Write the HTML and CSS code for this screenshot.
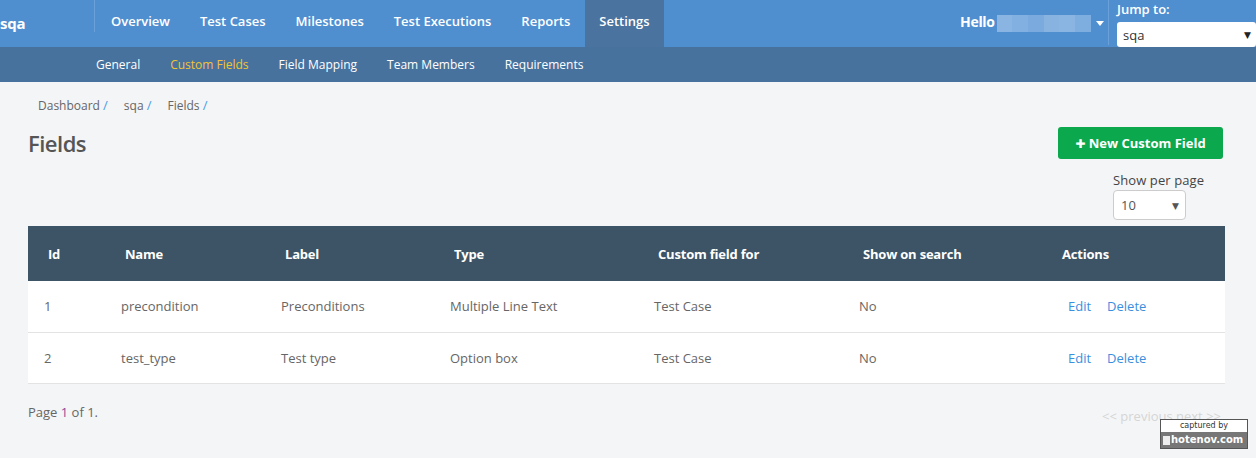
FILE: index.html
```html
<!DOCTYPE html>
<html>
<head>
<meta charset="utf-8">
<link rel="stylesheet" href="styles.css">
</head>
<body>
<header class="topbar">
  <a class="brand">sqa</a>
  <nav class="mainnav">
    <a>Overview</a>
    <a>Test Cases</a>
    <a>Milestones</a>
    <a>Test Executions</a>
    <a>Reports</a>
    <a class="active">Settings</a>
  </nav>
  <div class="user">
    <span class="hello">Hello</span>
    <span class="blur"><i></i><i></i><i></i><i></i><i></i><i></i></span>
    <span class="caret"></span>
  </div>
  <div class="jump">
    <label>Jump to:</label>
    <div class="jumpselect"><span>sqa</span><span class="tri">▼</span></div>
  </div>
</header>
<nav class="subnav">
  <a>General</a>
  <a class="active">Custom Fields</a>
  <a>Field Mapping</a>
  <a>Team Members</a>
  <a>Requirements</a>
</nav>
<main class="content">
  <div class="crumbs">
    <span>Dashboard <b>/</b></span>
    <span>sqa <b>/</b></span>
    <span>Fields <b>/</b></span>
  </div>
  <div class="titlerow">
    <h1>Fields</h1>
    <button class="newbtn"><span class="plus">✚</span> New Custom Field</button>
  </div>
  <div class="perpage">
    <div class="perwrap">
      <div class="perlabel">Show per page</div>
      <div class="perselect"><span>10</span><span class="tri">▼</span></div>
    </div>
  </div>
  <table class="grid">
    <thead>
      <tr><th class="c-id">Id</th><th class="c-name">Name</th><th class="c-label">Label</th><th class="c-type">Type</th><th class="c-for">Custom field for</th><th class="c-show">Show on search</th><th class="c-act">Actions</th></tr>
    </thead>
    <tbody>
      <tr><td>1</td><td>precondition</td><td>Preconditions</td><td>Multiple Line Text</td><td>Test Case</td><td>No</td><td class="acts"><a>Edit</a><a>Delete</a></td></tr>
      <tr><td>2</td><td>test_type</td><td>Test type</td><td>Option box</td><td>Test Case</td><td>No</td><td class="acts"><a>Edit</a><a>Delete</a></td></tr>
    </tbody>
  </table>
  <div class="pager">
    <span class="pageinfo">Page <em>1</em> of 1.</span>
    <span class="prevnext">&lt;&lt; previous next &gt;&gt;</span>
  </div>
</main>
<div class="stamp"><div class="st1">captured by</div><div class="st2"><i></i>hotenov.com</div></div>
</body>
</html>
```
FILE: styles.css
```css
* { box-sizing: border-box; }
html, body { margin: 0; padding: 0; }
body {
  width: 1256px;
  height: 458px;
  overflow: hidden;
  background: #f4f5f7;
  font-family: "Open Sans", "DejaVu Sans", sans-serif;
  font-size: 13px;
  color: #555;
  position: relative;
}
a { cursor: pointer; }

.topbar {
  height: 47px;
  background: #4f8fd0;
  display: flex;
  align-items: stretch;
  color: #fff;
}
.brand {
  width: 95px;
  border-right: 1px solid #6aa1da;
  margin: 0 0 15px 0;
  font-weight: 700;
  font-size: 15px;
  line-height: 47px;
  letter-spacing: -0.2px;
}
.mainnav { display: flex; margin-left: 1px; }
.mainnav a {
  display: block;
  padding: 0 15px;
  font-weight: 600;
  font-size: 13px;
  line-height: 42px;
  color: #fff;
}
.mainnav a.active { background: #4a73a0; padding: 0 0 0 14px; width: 79px; }
.user {
  margin-left: auto;
  display: flex;
  align-items: flex-start;
  padding-top: 13px;
  width: 148px;
}
.hello { font-weight: 700; font-size: 14px; line-height: 18px; letter-spacing: -0.3px; }
.blur { display: flex; margin-left: 2px; width: 94px; height: 17px; margin-top: 2px; }
.blur i { flex: 1; display: block; background: #8ab5e2; }
.blur i:nth-child(2) { background: #82b0e0; }
.blur i:nth-child(3) { background: #7aaade; }
.blur i:nth-child(4) { background: #88b3e1; }
.blur i:nth-child(6) { background: #7eaddf; }
.caret {
  width: 0; height: 0;
  border-left: 4px solid transparent;
  border-right: 4px solid transparent;
  border-top: 5px solid #fff;
  margin: 8px 0 0 5px;
}
.jump {
  border-left: 1px solid #6aa1da;
  padding-left: 8px;
  width: 148px;
  margin-bottom: 2px;
}
.jump label { display: block; font-weight: 600; font-size: 13px; line-height: 16px; margin-top: 1px; }
.jumpselect {
  margin-top: 5px;
  height: 25px;
  background: #fff;
  border-radius: 3px;
  color: #333;
  display: flex;
  align-items: center;
  justify-content: space-between;
  padding: 0 5px 0 6px;
  font-size: 13px;
}
.tri { font-size: 9px; color: #222; }

.subnav {
  height: 35px;
  background: #47729e;
  display: flex;
  align-items: center;
  padding-left: 81px;
}
.subnav a {
  color: #fff;
  font-size: 12px;
  font-weight: 500;
  padding: 0 15px;
  line-height: 35px;
}
.subnav a.active { color: #f4c430; }

.content { padding: 0 31px 0 28px; }
.crumbs { padding: 14px 0 0 10px; line-height: 18px; display: flex; gap: 16px; color: #666; font-size: 12px; }
.crumbs b { font-weight: 400; color: #4a9ee6; font-size: 13px; }
.titlerow { display: flex; justify-content: space-between; align-items: center; margin-top: 12px; padding-right: 2px; }
h1 { margin: 0; font-size: 22px; font-weight: 600; color: #555; line-height: 30px; letter-spacing: -0.5px; }
.newbtn {
  background: #0ba84e;
  border: 0;
  border-radius: 3px;
  color: #fff;
  font-family: inherit;
  font-weight: 700;
  font-size: 13px;
  width: 165px;
  height: 32px;
  padding: 0;
}
.plus { font-size: 12px; }
.perpage { display: flex; justify-content: flex-end; margin-top: 12px; padding-right: 20px; }
.perwrap { width: 92px; }
.perlabel { font-size: 13px; color: #444; line-height: 18px; letter-spacing: 0.1px; }
.perselect {
  margin-top: 1px;
  width: 73px;
  height: 30px;
  background: #fff;
  border: 1px solid #ccc;
  border-radius: 4px;
  display: flex;
  align-items: center;
  justify-content: space-between;
  padding: 0 6px 0 7px;
  color: #555;
}
.perselect .tri { color: #555; }

.grid {
  margin-top: 6px;
  width: 1197px;
  border-collapse: collapse;
  background: #fff;
}
.grid th {
  background: #3d5466;
  color: #fff;
  font-weight: 700;
  text-align: left;
  height: 55px;
  padding: 0 0 0 20px;
  font-size: 13px;
  letter-spacing: -0.2px;
}
.grid td {
  height: 51px;
  padding: 0 0 0 16px;
  border-bottom: 1px solid #e3e3e3;
  color: #666;
}
.c-id { width: 77px; }
.c-name { width: 160px; }
.c-label { width: 169px; }
.c-type { width: 204px; }
.c-for { width: 205px; }
.c-show { width: 199px; }
.grid td.acts { padding-left: 26px; }
.acts a { color: #3a8fde; margin-right: 16px; }

.pager { display: flex; justify-content: space-between; margin-top: 19px; }
.pageinfo { color: #666; }
.pageinfo em { font-style: normal; color: #8b4a9a; }
.prevnext { color: #d5d5d5; margin-top: 4px; margin-right: 4px; }

.stamp {
  position: absolute;
  left: 1160px;
  top: 419px;
  width: 88px;
  border: 1px solid #555;
  font-family: "DejaVu Sans", sans-serif;
}
.st1 { background: #fff; color: #333; font-size: 8px; text-align: center; line-height: 12px; }
.st2 { background: #777; color: #fff; font-size: 10px; line-height: 16px; font-weight: 700; display: flex; align-items: center; padding-left: 2px; }
.st2 i { display: inline-block; width: 7px; height: 9px; background: #eee; margin-right: 1px; }
```
